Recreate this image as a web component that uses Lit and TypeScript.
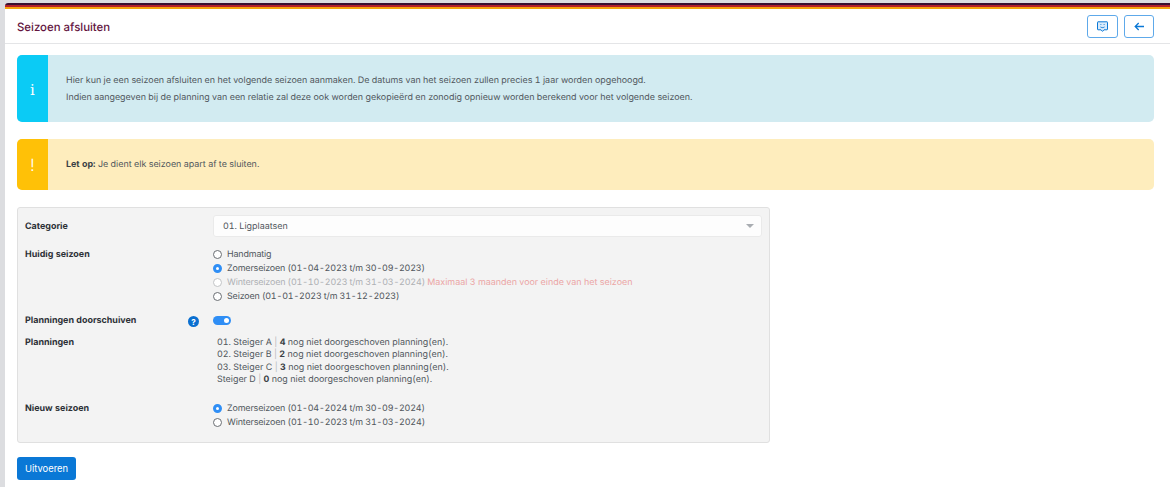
import { LitElement, html, css } from "lit";
import { customElement } from "lit/decorators.js";

@customElement("app-root")
export class AppRoot extends LitElement {
  static styles = css`
    :host { display: block; height: 487px; overflow: hidden; background: #dcdde0; font-family: Inter, "Noto Sans", sans-serif; font-size: 8.93px; color: #50565c; text-rendering: geometricPrecision; font-variant-numeric: tabular-nums; }
    * { box-sizing: border-box; }
    .page { margin: 3px 0 0 5px; height: 484px; background: #fff; display: flex; flex-direction: column; border-top-left-radius: 3px; overflow: hidden; }
    .flag { height: 6px; flex: none; background: linear-gradient(#3b1030 0 2px, #b3202a 2px 4px, #f5a40d 4px 6px); }
    .head { height: 35px; flex: none; border-bottom: 1px solid #e4e5e7; display: flex; align-items: center; justify-content: space-between; padding: 1px 16px 0 12px; }
    .title { font-size: 11.4px; font-weight: 500; color: #63153f; }
    .actions { display: flex; gap: 6px; }
    .ibtn { width: 31px; height: 23px; border: 1px solid #5ea9ea; border-radius: 3px; background: #fff; display: flex; align-items: center; justify-content: center; padding: 0; }
    .ibtn + .ibtn { width: 30px; }
    .body { padding: 11px 16px 0 12px; display: flex; flex-direction: column; }
    .alert { display: flex; border-radius: 5px; overflow: hidden; }
    .alert .side { width: 31px; flex: none; display: flex; align-items: center; justify-content: center; color: #fff; font-size: 16px; }
    .alert .txt { padding: 2px 18px 0; display: flex; flex-direction: column; justify-content: center; line-height: 16.5px; }
    .info { height: 67px; background: #d2ebf1; margin-bottom: 17px; }
    .info .side { background: #0bcbf5; font-family: "DejaVu Serif", serif; font-size: 15px; padding-top: 2px; }
    .warn { height: 51px; background: #feedbd; margin-bottom: 17px; }
    .warn .side { background: #ffc107; font-weight: 300; font-size: 17px; padding-top: 2px; }
    b { font-weight: 700; color: #3a3f45; }
    .panel { width: 753px; height: 236px; background: #f3f3f3; border: 1px solid #e0e0e0; border-radius: 3px; padding: 7px 7px 0 7px; display: flex; flex-direction: column; }
    .row { display: flex; }
    .r1 { height: 32px; }
    .r2 { height: 66px; }
    .r3 { height: 22px; }
    .lab { width: 188px; flex: none; font-weight: 700; color: #2c3036; display: flex; justify-content: space-between; padding: 1px 14px 0 0; line-height: 14px; }
    .r1 .lab { padding-top: 5px; }
    .sel { width: 549px; height: 22px; background: #fdfdfd; border: 1px solid #eaeaea; border-radius: 3px; display: flex; align-items: center; justify-content: space-between; padding: 0 7px 0 9px; }
    .caret { width: 0; height: 0; border-left: 4px solid transparent; border-right: 4px solid transparent; border-top: 4px solid #a9adb2; }
    .radios { display: flex; flex-direction: column; }
    .r { display: flex; align-items: center; height: 14px; gap: 5px; white-space: nowrap; letter-spacing: -0.15px; }
    .dot { width: 9px; height: 9px; border-radius: 50%; border: 1px solid #6a6e73; background: #fff; flex: none; }
    .dot.on { border: 3px solid #2f8ef5; }
    .dis { color: #aeb0b3; }
    .dis .dot { border-color: #c2c4c6; }
    .err { color: #eba5a5; letter-spacing: 0; }
    .q { width: 11px; height: 11px; border-radius: 50%; background: #0a6fd0; color: #fff; font-size: 8px; font-weight: 700; display: flex; align-items: center; justify-content: center; margin-top: 2px; }
    .sw { width: 18px; height: 9px; border-radius: 5px; background: #2f8ef5; margin-top: 3px; position: relative; }
    .sw::after { content: ""; position: absolute; right: 2px; top: 2px; width: 5px; height: 5px; border-radius: 50%; background: #fff; }
    .pl { padding: 2px 0 0 4px; line-height: 12.33px; }
    .pl i { font-style: normal; color: #b9bcc0; }
    .run { margin-top: 14px; width: 59px; height: 23px; background: #0a78d6; color: #fff; border: 0; border-radius: 3px; font: inherit; font-size: 9.4px; padding: 0; }
  `;

  private radio(text: string, on = false, cls = "", extra?: unknown) {
    return html`<div class="r ${cls}"><span class="dot ${on ? "on" : ""}"></span><span>${text}${extra ?? ""}</span></div>`;
  }

  render() {
    return html`
      <div class="page">
        <div class="flag"></div>
        <div class="head">
          <div class="title">Seizoen afsluiten</div>
          <div class="actions">
            <button class="ibtn" aria-label="Feedback"><svg width="11" height="11" viewBox="0 0 11 11" fill="#d8eafa" stroke="#0a78d6"><path d="M1 .8h9a.5.5 0 0 1 .5.5v7a.5.5 0 0 1-.5.5H7L5.500 10.400 4 8.800H1a.5.5 0 0 1-.5-.5v-7A.5.5 0 0 1 1 .8Z"/><path fill="none" d="M3.500 3.500h.8M6.700 3.500h.8M3.500 6c1 .8 3 .8 4 0"/></svg></button>
            <button class="ibtn" aria-label="Terug"><svg width="11" height="9" viewBox="0 0 11 9" fill="none" stroke="#0a78d6" stroke-width="1.300"><path d="M10 4.500H1.200M4.700 1 1.200 4.500 4.700 8"/></svg></button>
          </div>
        </div>
        <div class="body">
          <div class="alert info">
            <div class="side">i</div>
            <div class="txt">
              <div>Hier kun je een seizoen afsluiten en het volgende seizoen aanmaken. De datums van het seizoen zullen precies 1 jaar worden opgehoogd.</div>
              <div>Indien aangegeven bij de planning van een relatie zal deze ook worden gekopieërd en zonodig opnieuw worden berekend voor het volgende seizoen.</div>
            </div>
          </div>
          <div class="alert warn">
            <div class="side">!</div>
            <div class="txt"><div><b>Let op:</b> Je dient elk seizoen apart af te sluiten.</div></div>
          </div>
          <div class="panel">
            <div class="row r1">
              <div class="lab">Categorie</div>
              <div class="sel"><span>01. Ligplaatsen</span><span class="caret"></span></div>
            </div>
            <div class="row r2">
              <div class="lab">Huidig seizoen</div>
              <div class="radios">
                ${this.radio("Handmatig")}
                ${this.radio("Zomerseizoen (01-04-2023 t/m 30-09-2023)", true)}
                ${this.radio("Winterseizoen (01-10-2023 t/m 31-03-2024)", false, "dis", html` <span class="err">Maximaal 3 maanden voor einde van het seizoen</span>`)}
                ${this.radio("Seizoen (01-01-2023 t/m 31-12-2023)")}
              </div>
            </div>
            <div class="row r3">
              <div class="lab">Planningen doorschuiven<span class="q">?</span></div>
              <div class="sw"></div>
            </div>
            <div class="row r2">
              <div class="lab">Planningen</div>
              <div class="pl">
                <div>01. Steiger A <i>|</i> <b>4</b> nog niet doorgeschoven planning(en).</div>
                <div>02. Steiger B <i>|</i> <b>2</b> nog niet doorgeschoven planning(en).</div>
                <div>03. Steiger C <i>|</i> <b>3</b> nog niet doorgeschoven planning(en).</div>
                <div>Steiger D <i>|</i> <b>0</b> nog niet doorgeschoven planning(en).</div>
              </div>
            </div>
            <div class="row">
              <div class="lab">Nieuw seizoen</div>
              <div class="radios">
                ${this.radio("Zomerseizoen (01-04-2024 t/m 30-09-2024)", true)}
                ${this.radio("Winterseizoen (01-10-2023 t/m 31-03-2024)")}
              </div>
            </div>
          </div>
          <button class="run">Uitvoeren</button>
        </div>
      </div>`;
  }
}
